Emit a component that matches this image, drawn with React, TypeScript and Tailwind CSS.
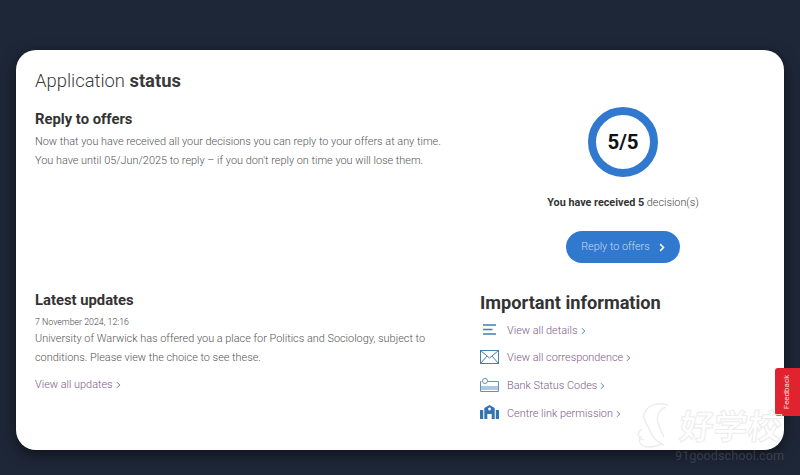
import React from "react";

const Chev = () => (
  <svg viewBox="0 0 8 12" className="inline-block w-[5px] h-[8px] ml-[3px] align-[-1px]" fill="none" stroke="#4f7fa8" strokeWidth="1.6">
    <path d="M1.500 1.500 6 6l-4.500 4.500" />
  </svg>
);

const IconList = () => (
  <svg viewBox="0 0 13 11" className="w-[13px] h-[11px] ml-[3px]" fill="none" stroke="#3f7fb5" strokeWidth="1.400">
    <path d="M0 1h13M0 5.500h9.500M0 10h13" />
  </svg>
);
const IconMail = () => (
  <svg viewBox="0 0 19 14" className="w-[19px] h-[14px]" fill="none" stroke="#4a7fae" strokeWidth="1">
    <rect x="0.500" y="0.500" width="18" height="13" />
    <path d="M0.500 0.500 9.500 8l9-7.500M0.500 13.500l6.500-7.500M18.500 13.500 12 6" />
  </svg>
);
const IconBank = () => (
  <svg viewBox="0 0 19 14" className="w-[19px] h-[14px]" fill="none" stroke="#5f93c0" strokeWidth="1">
    <path d="M0.500 3.500h1M8 3.500h10.500V13.500H0.500V3.500M0.500 9h18M0.500 11h18" />
    <circle cx="5" cy="3" r="2.500" />
  </svg>
);
const IconCentre = () => (
  <svg viewBox="0 0 19 14" className="w-[19px] h-[14px]" fill="#3574b3" fillRule="evenodd">
    <path d="M0 5h3.200v9H0zM15.800 5H19v9h-3.200zM4.300 3l5.200-3 5.200 3v11h-3V9H7.300v5h-3zM9.500 2.600a1.400 1.400 0 1 0 .01 0z" />
  </svg>
);

const links = [
  { label: "View all details", icon: <IconList /> },
  { label: "View all correspondence", icon: <IconMail /> },
  { label: "Bank Status Codes", icon: <IconBank /> },
  { label: "Centre link permission", icon: <IconCentre /> },
];

export default function App() {
  return (
    <div
      className="relative w-[800px] h-[475px] overflow-hidden bg-[#1e2738] pt-[50px] px-[16px] text-[#5f5f5f] font-light"
      style={{ fontFamily: "Roboto, 'Liberation Sans', sans-serif" }}
    >
      <div className="relative h-[400px] rounded-[20px] bg-white pl-[19px] pr-[24px] pt-[18px] shadow-[0_4px_14px_rgba(0,0,0,0.55)]">
        <h1 className="text-[18.400px] leading-[26px] text-[#3a3a3a] font-light">
          Application <span className="font-bold">status</span>
        </h1>
        <div className="flex h-[181px] mt-[13px]">
          <div className="w-[445px]">
            <h2 className="text-[14.800px] leading-[22px] mt-[1px] font-bold text-[#333]">Reply to offers</h2>
            <p className="mt-[3px] text-[10.900px] leading-[18.500px] text-[#555] font-light">
              Now that you have received all your decisions you can reply to your offers at any time.
              <br />
              You have until 05/Jun/2025 to reply – if you don't reply on time you will lose them.
            </p>
          </div>
          <div className="flex-1 flex flex-col items-center pl-[6px]">
            <div className="w-[70px] h-[70px] rounded-full border-[8px] border-[#3178cf] flex items-center justify-center text-[20.500px] font-bold text-[#111]">
              5/5
            </div>
            <p className="mt-[18px] text-[10.800px] leading-[16px] font-light text-[#444]">
              <span className="font-bold text-[#333]">You have received 5</span> decision(s)
            </p>
            <button className="mt-[20px] w-[114px] h-[32px] pt-[1px] rounded-full bg-[#3178cf] text-[#c5dcf5] text-[10.800px] font-light flex items-center justify-center gap-[9px]">
              Reply to offers
              <svg viewBox="0 0 8 12" className="w-[6px] h-[9px]" fill="none" stroke="#fff" strokeWidth="2">
                <path d="M1.500 1.500 6 6l-4.500 4.500" />
              </svg>
            </button>
          </div>
        </div>
        <div className="flex mt-[1px]">
          <div className="w-[445px]">
            <h2 className="text-[14.800px] leading-[22px] font-bold text-[#333]">Latest updates</h2>
            <p className="mt-[5px] text-[8.800px] leading-[12px] font-light text-[#444]">7 November 2024, 12:16</p>
            <p className="mt-[2px] text-[10.900px] leading-[18.500px] font-light text-[#555]">
              University of Warwick has offered you a place for Politics and Sociology, subject to
              <br />
              conditions. Please view the choice to see these.
            </p>
            <a className="block mt-[9px] text-[10.900px] leading-[18px] font-light text-[#7d5a88]">
              View all updates
              <Chev />
            </a>
          </div>
          <div className="flex-1 mt-[2px]">
            <h2 className="text-[18.200px] leading-[24px] font-bold text-[#333] whitespace-nowrap">Important information</h2>
            <ul className="mt-[7px] flex flex-col gap-[9.600px]">
              {links.map((l) => (
                <li key={l.label} className="flex items-center h-[18px]">
                  <span className="w-[27px] shrink-0 -mt-[3px]">{l.icon}</span>
                  <span className="text-[10.900px] font-light text-[#7d5a88] whitespace-nowrap">
                    {l.label}
                    <Chev />
                  </span>
                </li>
              ))}
            </ul>
          </div>
        </div>
      </div>

      <div className="absolute left-[775px] top-[368px] w-[25px] h-[48px] rounded-l-[3px] bg-[#e0232e] flex items-center justify-center">
        <span className="text-[8px] font-normal text-[#f8d9da] -rotate-90 whitespace-nowrap">Feedback</span>
      </div>

      <svg viewBox="0 0 36 50" className="absolute left-[636px] top-[403px] w-[36px] h-[50px]" fill="none" stroke="#ededed" strokeWidth="1.500">
        <path d="M32 2C22 -1 10 2 8 12c-1 6 4 10 6 16 2 6 8 12 14 14M30 4C24 6 20 12 22 20c1 5 4 9 6 14M6 26C0 30 2 36 8 37M6 33C1 37 4 44 12 44c6 0 10-1 14-3" />
      </svg>
      <div
        className="absolute left-[680px] top-[406px] text-[34px] leading-[38px] font-bold text-transparent -skew-x-6 whitespace-nowrap [-webkit-text-stroke:1px_#ececec]"
        style={{ fontFamily: "'Noto Sans CJK SC', sans-serif" }}
      >
        好学校
      </div>
      <div className="absolute left-[675px] top-[449px] text-[12.700px] leading-[14px] font-normal text-[#fff]/15 whitespace-nowrap">
        91goodschool.com
      </div>
    </div>
  );
}
